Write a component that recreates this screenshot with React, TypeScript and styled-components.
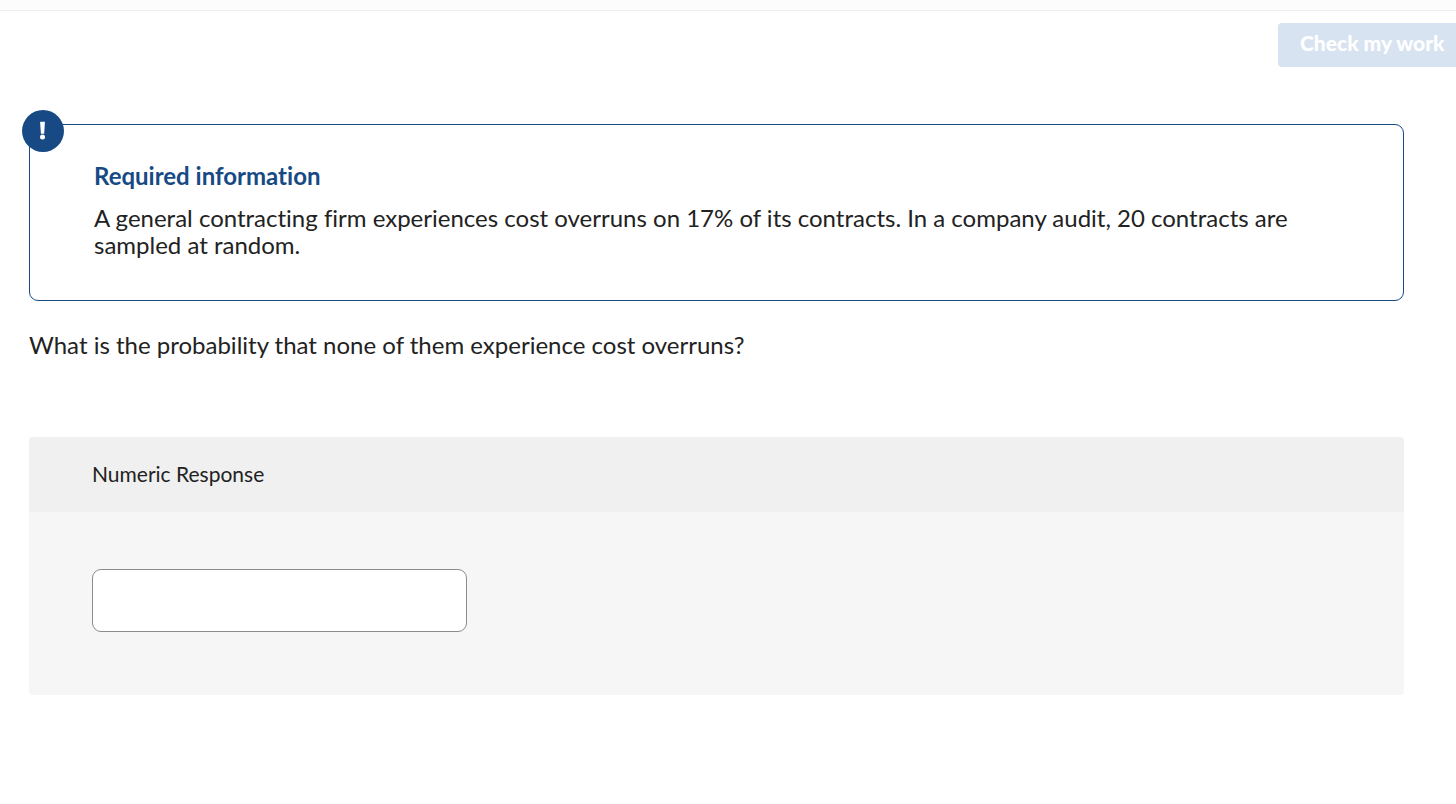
import React from "react";
import styled, { createGlobalStyle } from "styled-components";

const GlobalStyle = createGlobalStyle`
  *, *::before, *::after { box-sizing: border-box; }
  body {
    margin: 0;
    background: #fff;
    color: #222;
    font-family: Lato, sans-serif;
    font-size: 24px;
    font-variant-ligatures: none;
    line-height: 27px;
  }
`;

const TopStrip = styled.div`
  height: 11px;
  background: #fcfcfc;
  border-bottom: 1px solid #eee;
`;

const Toolbar = styled.header`
  display: flex;
  justify-content: flex-end;
  padding-top: 12px;
`;

const CheckButton = styled.button`
  min-width: 178px;
  height: 44px;
  padding: 0 10px 4px 22px;
  border: 0;
  border-radius: 4px 0 0 4px;
  background: #d7e3f1;
  color: #fff;
  font-family: inherit;
  font-size: 21px;
  font-weight: 900;
  line-height: 24px;
  text-align: left;
  white-space: nowrap;
`;

const Content = styled.main`
  padding: 57px 52px 40px 29px;
`;

const InfoCard = styled.section`
  position: relative;
  padding: 37px 64px 42px;
  border: 1px solid #174a84;
  border-radius: 9px;
`;

const AlertBadge = styled.span`
  position: absolute;
  top: -15px;
  left: -8px;
  display: flex;
  align-items: center;
  justify-content: center;
  width: 42px;
  height: 42px;
  border-radius: 50%;
  background: #174a84;
`;

const InfoTitle = styled.h2`
  margin: 0 0 15px;
  color: #174a84;
  font-size: 24px;
  font-weight: 700;
  line-height: 27px;
`;

const Paragraph = styled.p`
  margin: 0;
`;

const Question = styled.p`
  margin: 30px 0 79px;
`;

const ResponsePanel = styled.section`
  overflow: hidden;
  border-radius: 4px;
  background: #f6f6f6;
`;

const ResponseLabel = styled.label`
  display: block;
  padding: 23px 63px 25px;
  background: #f0f0f0;
  font-size: 21px;
`;

const ResponseBody = styled.div`
  display: flex;
  padding: 57px 63px 63px;
`;

const NumericInput = styled.input`
  width: 375px;
  max-width: 100%;
  height: 63px;
  padding: 0 20px;
  border: 1px solid #8c8c8c;
  border-radius: 9px;
  background: #fff;
  color: inherit;
  font: inherit;
`;

export default function App() {
  return (
    <>
      <GlobalStyle />
      <TopStrip />
      <Toolbar>
        <CheckButton type="button" disabled>Check my work</CheckButton>
      </Toolbar>
      <Content>
        <InfoCard>
          <AlertBadge>
            <svg width="6" height="20" viewBox="0 0 6 20" aria-hidden="true">
              <path d="M.1 1.2Q.1.8.6.8H4.5Q5 .8 4.9 1.3L4.2 12.8H.9Z" fill="#fff" />
              <circle cx="2.5" cy="16" r="2.5" fill="#fff" />
            </svg>
          </AlertBadge>
          <InfoTitle>Required information</InfoTitle>
          <Paragraph>
            A general contracting firm experiences cost overruns on 17% of its contracts. In a
            company audit, 20 contracts are sampled at random.
          </Paragraph>
        </InfoCard>
        <Question>What is the probability that none of them experience cost overruns?</Question>
        <ResponsePanel>
          <ResponseLabel htmlFor="numeric-response">Numeric Response</ResponseLabel>
          <ResponseBody>
            <NumericInput id="numeric-response" type="text" inputMode="decimal" />
          </ResponseBody>
        </ResponsePanel>
      </Content>
    </>
  );
}
